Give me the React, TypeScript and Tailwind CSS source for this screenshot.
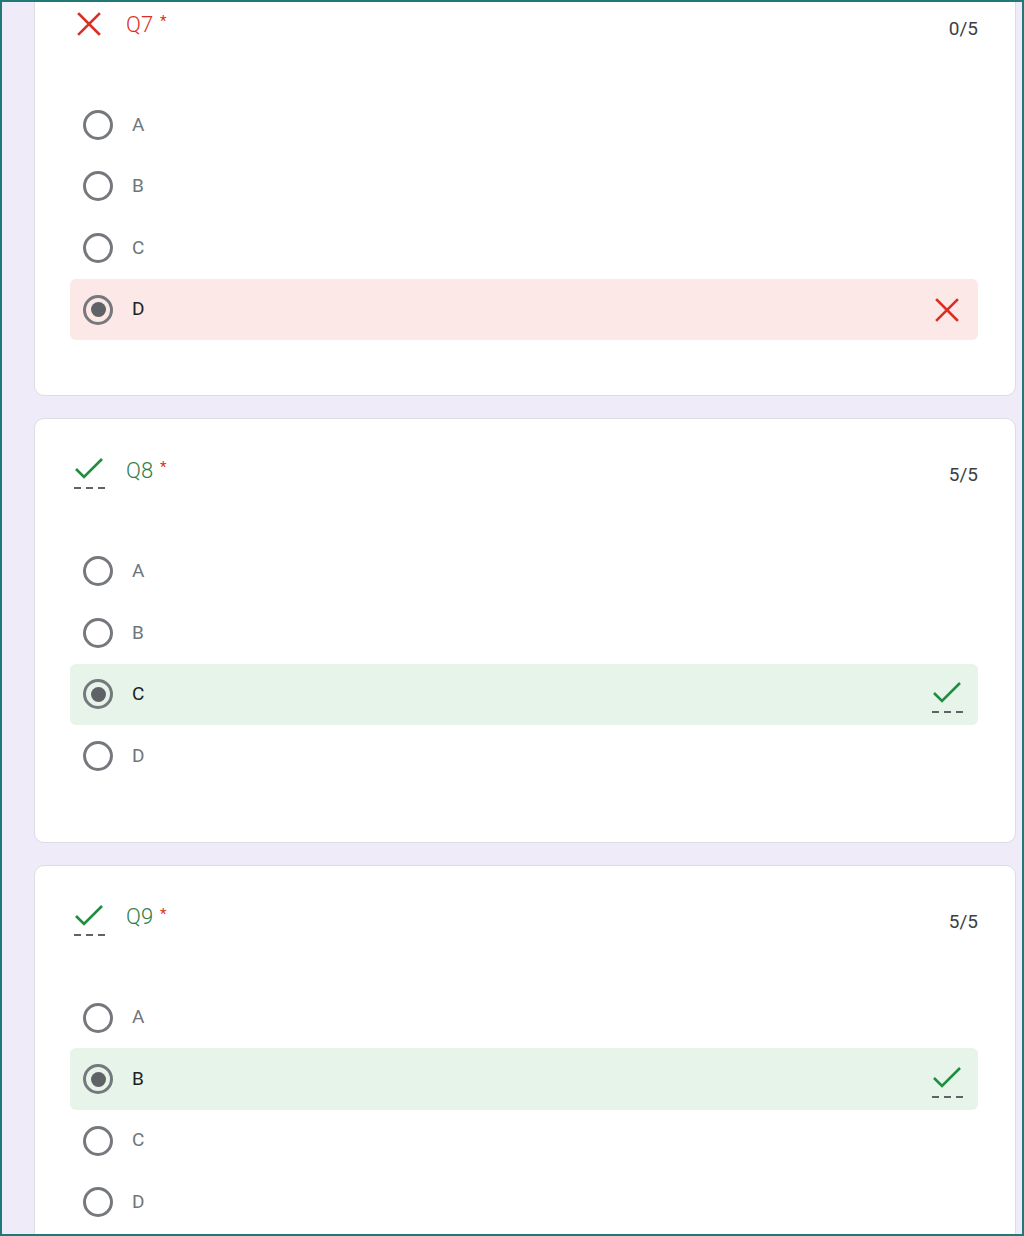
import React from 'react';

type Question = {
  id: string;
  label: string;
  correct: boolean;
  score: string;
  options: string[];
  selected: string;
};

const questions: Question[] = [
  { id: 'q7', label: 'Q7', correct: false, score: '0/5', options: ['A', 'B', 'C', 'D'], selected: 'D' },
  { id: 'q8', label: 'Q8', correct: true, score: '5/5', options: ['A', 'B', 'C', 'D'], selected: 'C' },
  { id: 'q9', label: 'Q9', correct: true, score: '5/5', options: ['A', 'B', 'C', 'D'], selected: 'B' },
];

const CrossIcon = ({ className = '' }: { className?: string }) => (
  <svg className={className} width="26" height="26" viewBox="0 0 26 26" fill="none">
    <path d="M3 3L23 23M23 3L3 23" stroke="#d93025" strokeWidth="2.6" strokeLinecap="square" />
  </svg>
);

// check mark with the little dashed line under it
const CheckIcon = ({ className = '' }: { className?: string }) => (
  <svg className={className} width="36" height="36" viewBox="0 0 36 36" fill="none">
    <path d="M4 13L12 21L30 3" stroke="#1e8e3e" strokeWidth="2.6" />
    <path d="M2 32H9M14 32H21M26 32H33" stroke="#5f6368" strokeWidth="2" />
  </svg>
);

const Radio = ({ checked }: { checked: boolean }) => (
  <div className="w-[30px] h-[30px] rounded-full border-[3px] border-[#75787c] flex items-center justify-center shrink-0">
    {checked && <div className="w-[15px] h-[15px] rounded-full bg-[#5f6368]" />}
  </div>
);

const QuestionCard = ({ q, first }: { q: Question; first?: boolean }) => {
  return (
    <div
      className={`bg-white rounded-[10px] border border-[#dcdce2] pt-[39px] pb-[55px] pl-[35px] pr-[37px] ${
        first ? 'mt-[-30px]' : ''
      }`}
    >
      {/* header */}
      <div className="flex items-start justify-between h-[24px]">
        <div className="flex items-center h-[24px]">
          {q.correct ? (
            <CheckIcon className="ml-[2px] mt-[8px]" />
          ) : (
            <CrossIcon className="ml-[6px]" />
          )}
          <span
            className={`text-[22px] font-light ${q.correct ? 'ml-[18px] text-[#2f7d46]' : 'ml-[24px] text-[#d93025]'}`}
          >
            {q.label}
          </span>
          <span className="text-[15px] text-[#d93025] ml-[7px] -mt-[6px]">*</span>
        </div>
        <span className="text-[19px] text-[#3c4043] mt-[3px]">{q.score}</span>
      </div>

      {/* options */}
      <div className="mt-[58px] flex flex-col">
        {q.options.map(opt => {
          const isSel = opt === q.selected;
          const bg = isSel ? (q.correct ? 'bg-[#e6f4ea]' : 'bg-[#fce8e6]') : '';
          return (
            <div key={opt} className={`h-[61.6px] rounded-[6px] flex items-center pl-[13px] pr-[12px] ${bg}`}>
              <Radio checked={isSel} />
              <span className={`ml-[19px] text-[19px] ${isSel ? 'text-[#202124]' : 'text-[#70757a]'}`}>{opt}</span>
              <div className="flex-1" />
              {isSel && (q.correct ? <CheckIcon className="mt-[8px]" /> : <CrossIcon className="mr-[6px]" />)}
            </div>
          );
        })}
      </div>
    </div>
  );
};

export default function App() {
  return (
    <div
      className="w-[1024px] h-[1236px] border-2 border-[#217977] bg-[#f0ebf8] overflow-hidden"
      style={{ fontFamily: 'Roboto, "Noto Sans", sans-serif' }}
    >
      <div className="ml-[32px] w-[982px] flex flex-col gap-[22px]">
        {questions.map((q, i) => (
          <QuestionCard key={q.id} q={q} first={i === 0} />
        ))}
      </div>
    </div>
  );
}
